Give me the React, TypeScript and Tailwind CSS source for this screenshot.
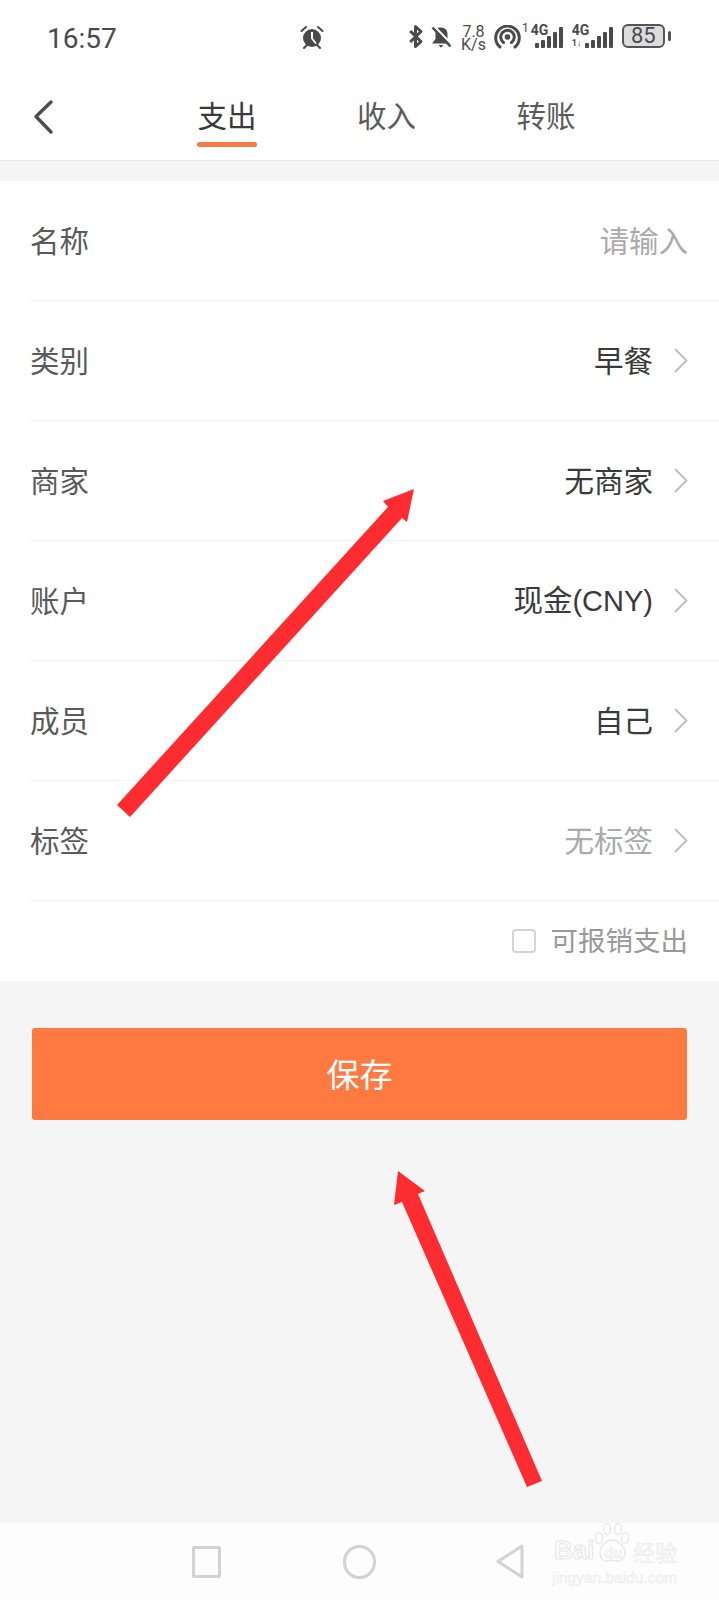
import React from "react";

const font = { fontFamily: '"Noto Sans CJK SC", "Noto Sans", sans-serif' };
const roboto = { fontFamily: "Roboto, sans-serif" };

const rows = [
  { label: "类别", value: "早餐" },
  { label: "商家", value: "无商家" },
  { label: "账户", value: "现金", suffix: "(CNY)" },
  { label: "成员", value: "自己" },
  { label: "标签", value: "无标签", muted: true },
];

function Chevron() {
  return (
    <svg width="14" height="25" viewBox="0 0 14 25" fill="none" className="ml-[21px]">
      <path d="M1.5 1.5 12.5 12.5 1.5 23.5" stroke="#bdbfc3" strokeWidth="2" strokeLinecap="round" strokeLinejoin="round" />
    </svg>
  );
}

function Row({ label, children }: { label: string; children: React.ReactNode }) {
  return (
    <div className="ml-[31px] flex h-[120px] items-center justify-between border-b border-[#f3f3f3] pr-[31px]">
      <span className="ml-[-1px] pb-[2px] text-[29.5px] text-[#5a5a5a]">{label}</span>
      <div className="flex items-center">{children}</div>
    </div>
  );
}

function Signal({ bars }: { bars: number[] }) {
  return (
    <div className="flex items-end gap-[2px]">
      {bars.map((h, i) => (
        <div key={i} className="w-[4px] rounded-[1px] bg-[#4a4a4a]" style={{ height: h }} />
      ))}
    </div>
  );
}

function StatusBar() {
  return (
    <div className="flex h-[75px] items-center pl-[47px] text-[#4a4a4a]">
      <span className="mt-[2px] w-[253px] text-[28px] leading-none" style={roboto}>
        16:57
      </span>
      {/* alarm */}
      <svg width="24" height="24" viewBox="0 0 24 24" className="mb-[1px]">
        <circle cx="12" cy="13" r="9" fill="#4a4a4a" />
        <path d="M12 7v6.5l4 5" stroke="#fff" strokeWidth="2" fill="none" />
        <path d="M1.5 6 6 2M22.5 6 18 2M4 23l3-3M20 23l-3-3" stroke="#4a4a4a" strokeWidth="2" strokeLinecap="round" />
      </svg>
      {/* bluetooth */}
      <svg width="14" height="23" viewBox="0 0 14 23" fill="none" className="mb-[2px] ml-[85px]">
        <path d="M1.2 6 12 16.5 6.5 21.5V1.5L12 6.5 1.2 17" stroke="#4a4a4a" strokeWidth="3" strokeLinejoin="round" />
      </svg>
      {/* muted bell */}
      <svg width="21" height="22" viewBox="0 0 21 22" className="mb-[2px] ml-[8px]">
        <path d="M10 1.5c4.5 0 6.5 3 6.5 6.5v5l3.5 4.5H1l3.5-4.5V7c0-3.5 2-5.5 5.5-5.5Z" fill="#4a4a4a" />
        <path d="M7.5 19h5l-2.5 2.8Z" fill="#4a4a4a" />
        <path d="M3 0 21 18.5" stroke="#fff" strokeWidth="2" />
        <path d="M1.5 1.5 19.5 20.5" stroke="#4a4a4a" strokeWidth="2.5" />
      </svg>
      <div className="ml-[10px] flex w-[23px] flex-col items-center text-[16px] leading-[13px]" style={roboto}>
        <span>7.8</span>
        <span>K/s</span>
      </div>
      {/* hotspot */}
      <svg width="27" height="24" viewBox="0 0 27 24" fill="none" className="mb-[2px] ml-[9px]">
        <circle cx="13.5" cy="12" r="2.8" fill="#4a4a4a" />
        <path d="M9.5 17.5a6.8 6.8 0 1 1 8 0" stroke="#4a4a4a" strokeWidth="3" strokeLinecap="round" />
        <path d="M6 22a11.8 11.8 0 1 1 15 0" stroke="#4a4a4a" strokeWidth="3" strokeLinecap="round" />
      </svg>
      <span className="mb-[19px] ml-[1px] text-[12px] leading-none" style={roboto}>
        1
      </span>
      <div className="relative mb-[3px] ml-[2px] h-[24px] w-[32px]">
        <span className="absolute left-0 top-[-1px] text-[14px] font-bold leading-none" style={roboto}>
          4G
        </span>
        <div className="absolute bottom-0 right-0">
          <Signal bars={[5, 8, 12, 16, 21]} />
        </div>
      </div>
      <div className="relative mb-[3px] ml-[9px] h-[24px] w-[41px]">
        <span className="absolute left-0 top-[-1px] text-[14px] font-bold leading-none" style={roboto}>
          4G
        </span>
        <span className="absolute bottom-0 left-0 text-[9px] font-bold leading-none" style={roboto}>
          1↓
        </span>
        <div className="absolute bottom-0 right-0">
          <Signal bars={[5, 8, 12, 16, 21]} />
        </div>
      </div>
      <div className="mb-[3px] ml-[9px] flex h-[24px] w-[43px] items-center justify-center rounded-[6px] border-2 border-[#555555] bg-[#dcdcdc] text-[22px] leading-none" style={roboto}>
        85
      </div>
      <div className="mb-[3px] ml-[3px] h-[10px] w-[3px] rounded-[2px] bg-[#555555]" />
    </div>
  );
}

function Header() {
  return (
    <div className="relative flex h-[86px] items-start border-b border-[#e8e8e8] bg-white">
      <svg width="22" height="36" viewBox="0 0 22 36" fill="none" className="absolute left-[32px] top-[24px]">
        <path d="M19 3 4 17.5 19 33" stroke="#4c4c4c" strokeWidth="3.4" strokeLinecap="round" strokeLinejoin="round" />
      </svg>
      <div className="ml-[147px] flex">
        <div className="flex w-[160px] flex-col items-center">
          <span className="mt-[17px] text-[29.5px] leading-[44px] text-[#3a3a3a]">支出</span>
          <div className="mt-[6px] h-[5px] w-[60px] rounded-full bg-[#f77a43]" />
        </div>
        <span className="mt-[17px] w-[159px] text-center text-[29.5px] leading-[44px] text-[#5a5a5a]">收入</span>
        <span className="mt-[17px] w-[160px] text-center text-[29.5px] leading-[44px] text-[#5a5a5a]">转账</span>
      </div>
    </div>
  );
}

function BaiduMark() {
  return (
    <div className="absolute left-[552px] top-0 h-[77px] w-[127px]" style={{ fontFamily: '"Liberation Sans", sans-serif' }}>
      <svg width="36" height="40" viewBox="0 0 36 40" fill="none" stroke="#e9e9e9" strokeWidth="1.5" className="absolute left-[42px] top-0">
        <ellipse cx="5" cy="15" rx="3.5" ry="5.5" />
        <ellipse cx="13" cy="6" rx="3.5" ry="5.5" />
        <ellipse cx="24" cy="6" rx="3.5" ry="5.5" />
        <ellipse cx="31" cy="15" rx="3.5" ry="5.5" />
        <path d="M6 30c0-6 6-13 12-13s13 7 13 13c0 5-4 8-7 8-2 0-4-1-6-1s-4 1-6 1c-3 0-6-3-6-8Z" />
      </svg>
      <span className="absolute left-[2px] top-[14px] text-[26px] font-bold leading-[26px] text-[#fbfbfb] [-webkit-text-stroke:1px_#e6e6e6]">Bai</span>
      <span className="absolute left-[52px] top-[22px] text-[15px] font-bold leading-[16px] text-[#fbfbfb] [-webkit-text-stroke:0.5px_#e6e6e6]">du</span>
      <span className="absolute left-[81px] top-[15px] text-[22px] leading-[26px] text-[#fbfbfb] [-webkit-text-stroke:0.5px_#e6e6e6]" style={font}>经验</span>
      <span className="absolute left-0 top-[47px] text-[15.5px] leading-[16px] text-[#f8f8f8] [-webkit-text-stroke:0.5px_#ebebeb]">jingyan.baidu.com</span>
    </div>
  );
}

export default function App() {
  return (
    <div className="relative flex h-[1600px] w-[719px] flex-col overflow-hidden bg-[#f5f5f5]" style={font}>
      <div className="bg-white">
        <StatusBar />
        <Header />
      </div>

      <div className="mt-[20px] bg-white">
        <Row label="名称">
          <span className="pb-[2px] text-[29.5px] text-[#aaaaaa]">请输入</span>
        </Row>
        {rows.map((r) => (
          <Row key={r.label} label={r.label}>
            <span className={`pb-[2px] text-[29.5px] ${r.muted ? "text-[#aaaaaa]" : "text-[#3a3a3a]"}`}>
              {r.value}
              {r.suffix && <span className="text-[29px]" style={{ fontFamily: '"Liberation Sans", sans-serif' }}>{r.suffix}</span>}
            </span>
            <Chevron />
          </Row>
        ))}
        <div className="flex h-[80px] items-center justify-end pr-[31px]">
          <div className="mr-[15px] h-[24px] w-[24px] rounded-[4px] border-2 border-[#d4d4d4]" />
          <span className="pb-[2px] text-[27.5px] text-[#999999]">可报销支出</span>
        </div>
      </div>

      <button className="mx-[32px] mt-[47px] flex h-[92px] items-center justify-center rounded-[3px] bg-[#ff7a41] pb-[1px] text-[33px] text-white">
        保存
      </button>

      <div className="relative mt-auto flex h-[77px] items-center bg-[#fdfdfd]">
        <div className="ml-[192px] h-[32px] w-[29px] rounded-[2px] border-[3px] border-[#d2d2d2]" />
        <div className="ml-[122px] h-[34px] w-[33px] rounded-full border-[3px] border-[#d2d2d2]" />
        <svg width="28" height="35" viewBox="0 0 28 35" fill="none" className="ml-[120px]">
          <path d="M26 2 2 17.5 26 33Z" stroke="#d2d2d2" strokeWidth="3" strokeLinejoin="round" />
        </svg>
        <BaiduMark />
      </div>

      {/* red annotation arrows */}
      <svg width="719" height="1600" viewBox="0 0 719 1600" className="pointer-events-none absolute left-0 top-0">
        <polygon points="414,489 383,501 388,507 117,805 130,817 402,518 407,522" fill="#fd2c30" />
        <polygon points="398,1171 425,1191 418,1194 542,1481 527,1487 402,1202 394,1205" fill="#fd2c30" />
      </svg>
    </div>
  );
}
